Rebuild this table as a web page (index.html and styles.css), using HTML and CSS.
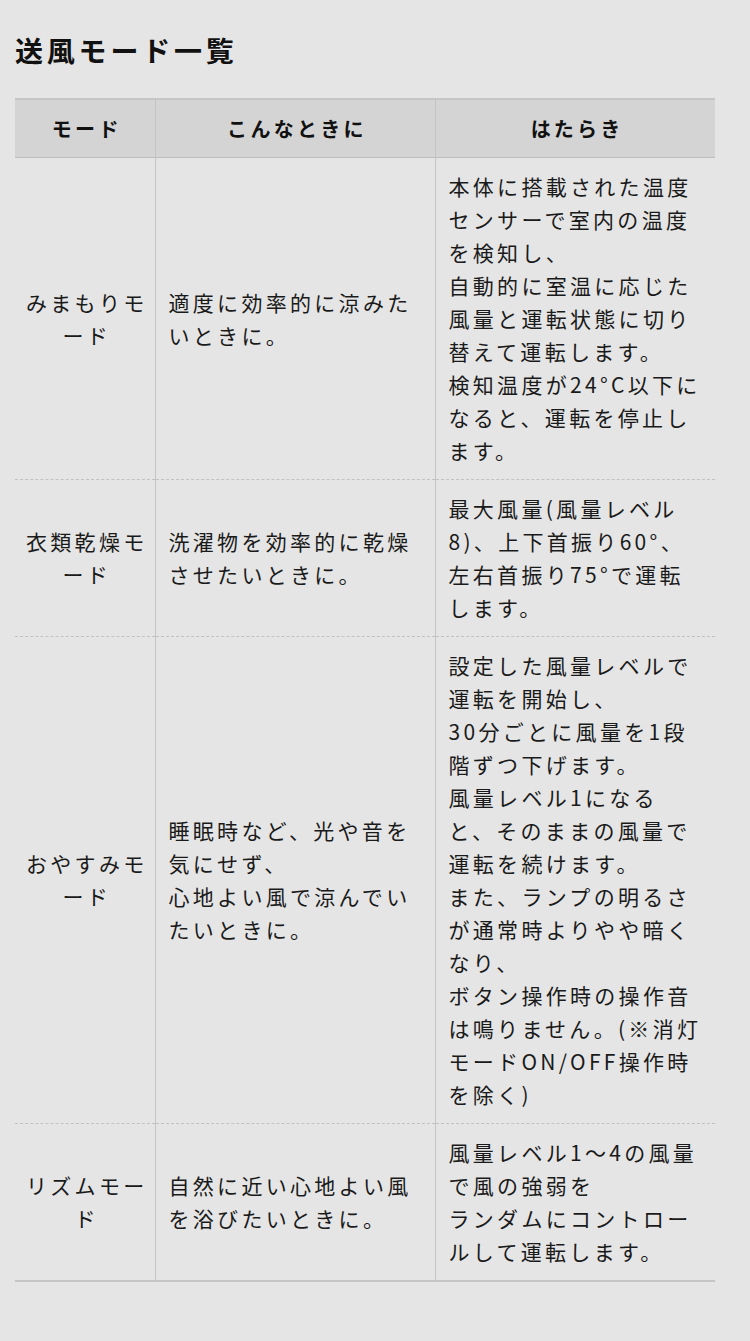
FILE: index.html
```html
<!DOCTYPE html>
<html lang="ja">
<head>
<meta charset="utf-8">
<title>送風モード一覧</title>
<link rel="stylesheet" href="styles.css">
</head>
<body>
<main class="page">
  <h2 class="title">送風モード一覧</h2>
  <table class="modes">
    <colgroup>
      <col class="c-mode">
      <col class="c-when">
      <col class="c-work">
    </colgroup>
    <thead>
      <tr>
        <th>モード</th>
        <th>こんなときに</th>
        <th>はたらき</th>
      </tr>
    </thead>
    <tbody>
      <tr>
        <td class="mode">みまもりモ<br>ード</td>
        <td>適度に効率的に涼みた<br>いときに。</td>
        <td>本体に搭載された温度<br>センサーで室内の温度<br>を検知し、<br>自動的に室温に応じた<br>風量と運転状態に切り<br>替えて運転します。<br>検知温度が24°C以下に<br>なると、運転を停止し<br>ます。</td>
      </tr>
      <tr>
        <td class="mode">衣類乾燥モ<br>ード</td>
        <td>洗濯物を効率的に乾燥<br>させたいときに。</td>
        <td>最大風量(風量レベル<br>8)、上下首振り60°、<br>左右首振り75°で運転<br>します。</td>
      </tr>
      <tr>
        <td class="mode">おやすみモ<br>ード</td>
        <td>睡眠時など、光や音を<br>気にせず、<br>心地よい風で涼んでい<br>たいときに。</td>
        <td>設定した風量レベルで<br>運転を開始し、<br>30分ごとに風量を1段<br>階ずつ下げます。<br>風量レベル1になる<br>と、そのままの風量で<br>運転を続けます。<br>また、ランプの明るさ<br>が通常時よりやや暗く<br>なり、<br>ボタン操作時の操作音<br>は鳴りません。(※消灯<br>モードON/OFF操作時<br>を除く)</td>
      </tr>
      <tr>
        <td class="mode">リズムモー<br>ド</td>
        <td>自然に近い心地よい風<br>を浴びたいときに。</td>
        <td>風量レベル1〜4の風量<br>で風の強弱を<br>ランダムにコントロー<br>ルして運転します。</td>
      </tr>
    </tbody>
  </table>
</main>
</body>
</html>
```

FILE: styles.css
```css
html, body {
  margin: 0;
  padding: 0;
  background: #e5e5e5;
}

body {
  font-family: "Noto Sans CJK JP", "Noto Sans", sans-serif;
  color: #1a1a1a;
}

.page {
  padding: 29px 35px 60px 15px;
}

.title {
  margin: 0 0 27px;
  font-size: 28px;
  line-height: 42px;
  font-weight: 700;
  letter-spacing: 3.8px;
  color: #111;
}

.modes {
  width: 700px;
  table-layout: fixed;
  border-collapse: collapse;
  font-size: 21px;
  line-height: 33px;
  letter-spacing: 3.3px;
}

.c-mode { width: 140px; }
.c-when { width: 280px; }
.c-work { width: 280px; }

.modes thead tr {
  background: #d4d4d4;
  border-top: 2px solid #c6c6c6;
  border-bottom: 1px solid #bdbdbd;
}

.modes th {
  padding: 12px 0 12px 4px;
  font-weight: 700;
  font-size: 20px;
  text-align: center;
  color: #111;
}

.modes th + th,
.modes td + td {
  border-left: 1px solid #c4c4c4;
}

.modes td {
  padding: 12px 10px 12px 13px;
  vertical-align: middle;
  white-space: nowrap;
  text-align: left;
}

.modes td.mode {
  text-align: center;
  padding: 12px 4px 12px 8px;
}

.modes tbody tr + tr {
  border-top: 1px dashed #c2c2c2;
}

.modes tbody tr:last-child {
  border-bottom: 2px solid #c6c6c6;
}
```
